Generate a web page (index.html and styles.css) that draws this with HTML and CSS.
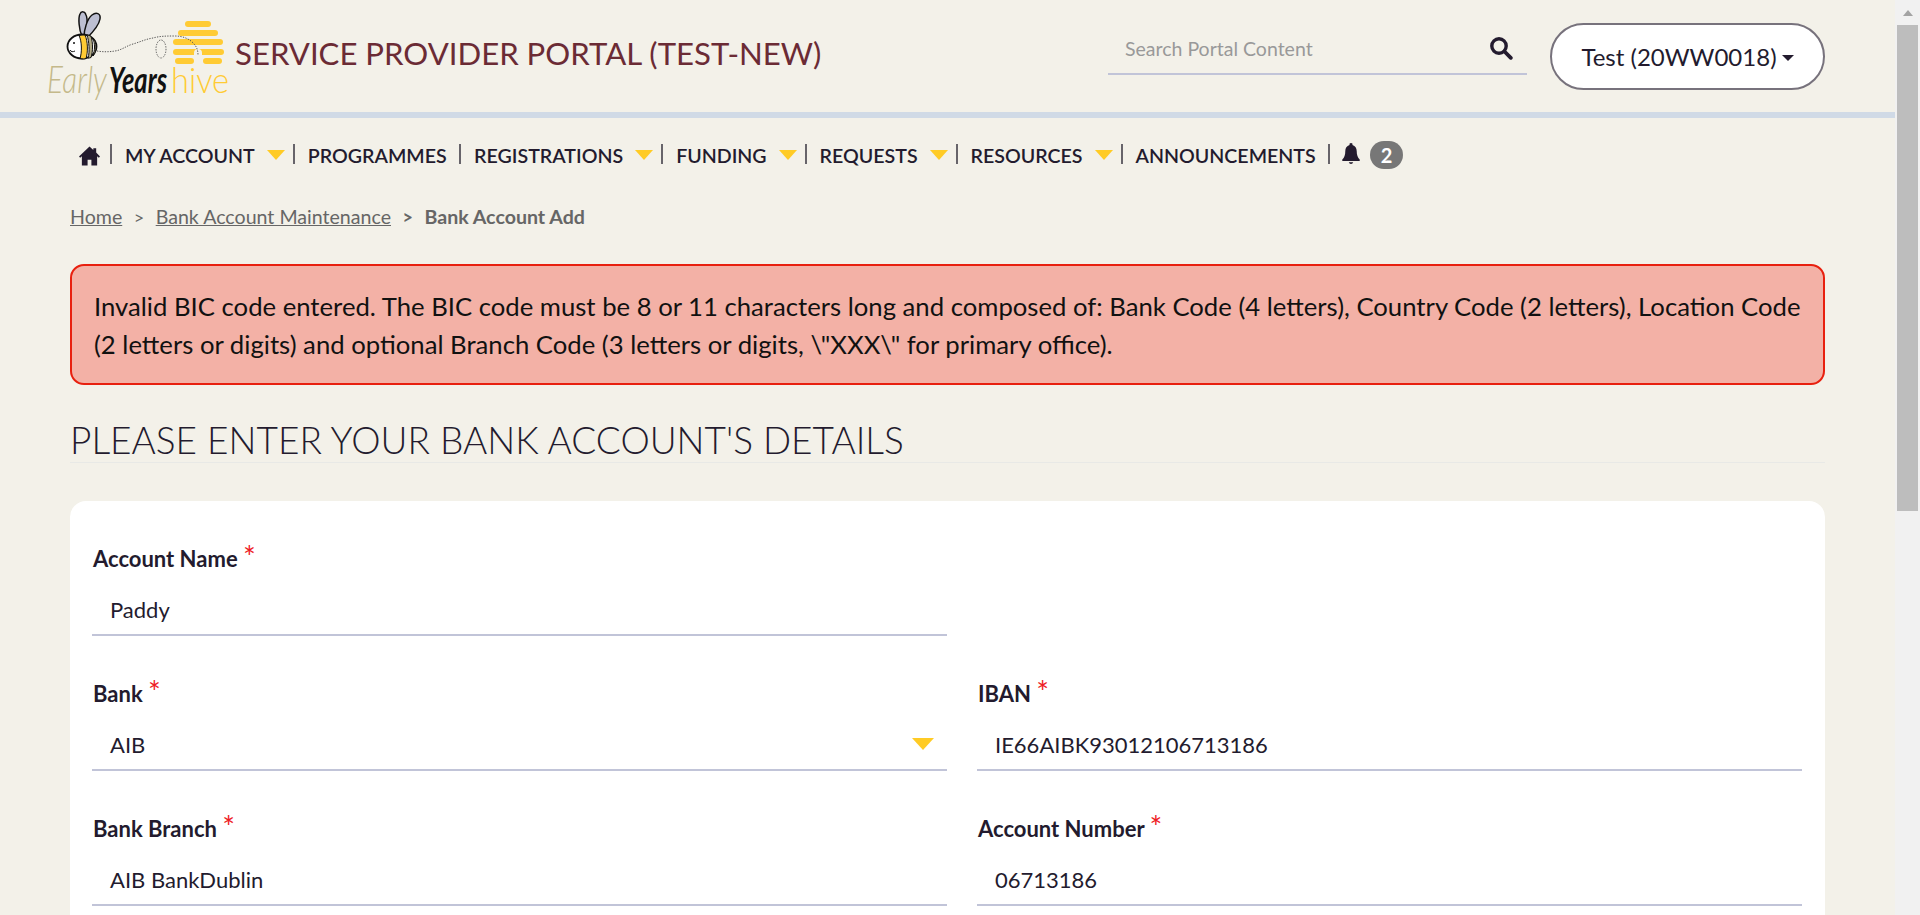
FILE: index.html
```html
<!DOCTYPE html>
<html lang="en">
<head>
<meta charset="utf-8">
<title>Bank Account Add</title>
<link rel="stylesheet" href="styles.css">
</head>
<body>
<div class="window">
  <div class="page">
    <header class="top">
      <svg class="logo" viewBox="0 0 195 100" width="195" height="100" role="img" aria-label="Early Years hive">
        <g fill="#ffcb34">
          <rect x="145" y="16" width="26" height="6" rx="3"/>
          <rect x="138" y="25" width="40" height="6" rx="3"/>
          <rect x="133" y="34" width="50" height="6" rx="3"/>
          <rect x="133" y="44" width="51" height="6" rx="3"/>
          <rect x="135" y="53" width="19" height="6" rx="3"/>
          <rect x="163" y="53" width="19" height="6" rx="3"/>
        </g>
        <path d="M154 50v-2a4 4 0 0 1 8 0v2z" fill="#f3f1e9"/>
        <path d="M57 46c6 1 12 1 18 0 7-1 11-5 18-7 7-2 13-5 20-6 7-2 14-2 22-2 8 0 15 3 19 8 3 3 4 7 4 11" fill="none" stroke="#555" stroke-width="1" stroke-dasharray="1.3 1.3"/>
        <ellipse cx="121" cy="44" rx="5" ry="9" fill="none" stroke="#555" stroke-width="1" stroke-dasharray="1.3 1.3"/>
        <path d="M42 31c-3-6-4-18-2-22 1-3 5-3 6 1 2 4 1 14-1 21z" fill="#bcbfd2" stroke="#111" stroke-width="1.5"/>
        <path d="M44 32c0-7 3-18 8-22 4-3 9-2 8 4-1 6-8 14-13 19z" fill="#bcbfd2" stroke="#111" stroke-width="1.5"/>
        <ellipse cx="42" cy="41.500" rx="14.500" ry="12" fill="#fff" stroke="#111" stroke-width="1.800"/>
        <path d="M39 30.500c3 6 3 17 1 23 3 .5 4 .5 6 0 2-6 2-17-1-23.500-2 0-4 0-6 .5z" fill="#ffcb34" stroke="#111" stroke-width="1"/>
        <path d="M47 30c2 6 3 17 1 23 1 0 2 0 3-.5 2-6 2-15 0-21-1-1-3-1.500-4-1.500z" fill="#b3ab85" stroke="#111" stroke-width="1"/>
        <path d="M53 33c2 6 2 12 0 18 2-2 3-5 3-9s-1-7-3-9z" fill="#b3ab85" stroke="#111" stroke-width="1"/>
        <circle cx="34" cy="38" r="1" fill="#111"/>
        <path d="M30 45c1 2 3 2 5 1" fill="none" stroke="#111" stroke-width="1"/>
        <text transform="translate(7 88) scale(.74 1)" class="lw-early" textLength="81" lengthAdjust="spacingAndGlyphs">Early</text>
        <text transform="translate(69 88) scale(.66 1)" class="lw-years" textLength="88" lengthAdjust="spacingAndGlyphs">Years</text>
        <text transform="translate(131 88) scale(.88 1)" class="lw-hive" textLength="66" lengthAdjust="spacingAndGlyphs">hive</text>
      </svg>
      <div class="portal">SERVICE PROVIDER PORTAL (TEST-NEW)</div>
      <div class="search">
        <span class="search-text">Search Portal Content</span>
        <svg class="search-icon" viewBox="0 0 24 24" width="24" height="24" aria-hidden="true"><circle cx="10" cy="10" r="7.2" fill="none" stroke="#231b2e" stroke-width="3.4"/><path d="M15.5 15.5l6.3 6.3" stroke="#231b2e" stroke-width="3.8" stroke-linecap="round"/></svg>
      </div>
      <button class="user">Test (20WW0018)<span class="caret"></span></button>
    </header>
    <nav class="nav">
      <svg class="home" viewBox="0 0 22 20" width="21" height="20" aria-hidden="true"><path d="M11 0L0 10.500l1.200 1.300L3 10.200V20h6v-6h4v6h6v-9.800l1.800 1.600 1.200-1.300L18 6.300V2h-3v1.600z" fill="#231b2e"/></svg>
      <span class="sep"></span>
      <a class="item">MY ACCOUNT<span class="tri"></span></a><span class="sep"></span>
      <a class="item">PROGRAMMES</a><span class="sep"></span>
      <a class="item">REGISTRATIONS<span class="tri"></span></a><span class="sep"></span>
      <a class="item">FUNDING<span class="tri"></span></a><span class="sep"></span>
      <a class="item">REQUESTS<span class="tri"></span></a><span class="sep"></span>
      <a class="item">RESOURCES<span class="tri"></span></a><span class="sep"></span>
      <a class="item">ANNOUNCEMENTS</a><span class="sep"></span>
      <svg class="bell" viewBox="0 0 18 22" width="18" height="22" aria-hidden="true"><path d="M9 0a1.600 1.600 0 0 0-1.500 2C4.700 2.800 3.300 5.300 3.300 8c0 4-1 6.500-3 8.500v1.500h17.400v-1.500c-2-2-3-4.500-3-8.500 0-2.700-1.400-5.200-4.200-6A1.600 1.600 0 0 0 9 0zM6.800 19.300a2.300 2.300 0 0 0 4.400 0z" fill="#231b2e"/></svg>
      <span class="badge">2</span>
    </nav>
    <main class="content">
      <div class="crumbs"><a href="#">Home</a><span class="gt">&gt;</span><a href="#">Bank Account Maintenance</a><span class="gt strong">&gt;</span><b>Bank Account Add</b></div>
      <div class="alert">Invalid BIC code entered. The BIC code must be 8 or 11 characters long and composed of: Bank Code (4 letters), Country Code (2 letters), Location Code (2 letters or digits) and optional Branch Code (3 letters or digits, \"XXX\" for primary office).</div>
      <h1 class="heading">PLEASE ENTER YOUR BANK ACCOUNT'S DETAILS</h1>
      <form class="card">
        <div class="field">
          <label>Account Name <i>*</i></label>
          <div class="value">Paddy</div>
        </div>
        <div class="field"></div>
        <div class="field">
          <label>Bank <i>*</i></label>
          <div class="value">AIB<span class="tri select"></span></div>
        </div>
        <div class="field">
          <label>IBAN <i>*</i></label>
          <div class="value">IE66AIBK93012106713186</div>
        </div>
        <div class="field">
          <label>Bank Branch <i>*</i></label>
          <div class="value">AIB BankDublin</div>
        </div>
        <div class="field">
          <label>Account Number <i>*</i></label>
          <div class="value">06713186</div>
        </div>
      </form>
    </main>
  </div>
  <div class="scrollbar"><div class="sb-up"></div><div class="sb-thumb"></div></div>
</div>
</body>
</html>
```
FILE: styles.css
```css
* { box-sizing: border-box; }
html, body { margin: 0; height: 100%; overflow: hidden; }
body { font-family: Lato, "Liberation Sans", sans-serif; color: #231b2e; background: #f3f1e9; }
a { color: inherit; }

.window { display: flex; height: 915px; }
.page { flex: 1; min-width: 0; overflow: hidden; }

.top { height: 118px; display: flex; align-items: flex-start; border-bottom: 6px solid #d0dae6; padding-left: 40px; }
.logo { margin-top: 5px; flex: none; display: block; font-family: Lato, sans-serif; }
.lw-early { fill: #c4b98a; font-size: 38px; font-style: italic; font-weight: 300; }
.lw-years { fill: #111; font-size: 36px; font-style: italic; font-weight: 700; }
.lw-hive { fill: #ffcb34; font-size: 36px; font-weight: 300; }
.portal { font-size: 31.15px; line-height: 36px; color: #6b2b35; margin-top: 35px; width: 873px; flex: none; white-space: nowrap; }
.search { width: 419px; height: 75px; flex: none; border-bottom: 2px solid #c1c4d8; display: flex; justify-content: space-between; align-items: center; padding: 24px 14px 0 17px; }
.search-text { font-size: 19.5px; color: #999; }
.search-icon { margin-top: -2px; }
.user { margin-left: 23px; width: 275px; height: 67px; margin-top: 23px; flex: none; background: #fff; border: 2px solid #77727c; border-radius: 34px; font: 400 24px Lato, sans-serif; color: #231b2e; display: flex; align-items: center; justify-content: center; padding: 0; }
.caret { border-left: 6px solid transparent; border-right: 6px solid transparent; border-top: 6px solid #231b2e; margin-left: 5px; margin-top: 2px; }

.nav { display: flex; align-items: center; height: 43px; margin-top: 16px; padding-left: 79px; font-size: 19.6px; font-weight: 600; white-space: nowrap; }
.home { flex: none; }
.sep { width: 2px; height: 20px; background: #67646a; margin: -4px 13px 0 12.5px; flex: none; }
.home + .sep { margin-left: 10px; }
.item { display: flex; align-items: center; }
.tri { display: inline-block; width: 0; height: 0; border-left: 9.5px solid transparent; border-right: 9.5px solid transparent; border-top: 10px solid #ffcb25; margin-left: 12px; margin-right: -4.5px; margin-top: -2px; }
.bell { margin-left: -1px; margin-top: -3px; flex: none; }
.badge { background: #777; color: #fff; font-weight: 700; width: 33px; height: 28px; border-radius: 14px; display: flex; align-items: center; justify-content: center; font-size: 20px; margin-left: 10px; margin-top: -1px; }

.content { padding: 0 0 0 70px; width: 1825px; }
.crumbs { margin-top: 27px; height: 26px; font-size: 19.6px; line-height: 26px; color: #666; white-space: nowrap; }
.crumbs b { font-weight: 700; }
.gt { margin: 0 11.5px; font-size: 18px; }
.gt.strong { font-weight: 700; }
.alert { margin-top: 34px; height: 121px; border: 2px solid #e8200f; border-radius: 14px; background: #f3b1a6; padding: 21px 22px 0 22px; font-size: 25.7px; line-height: 38px; color: #111; }
.heading { margin: 33px 0 0; height: 45px; border-bottom: 1px solid #e8e9e6; font-size: 37px; line-height: 44px; font-weight: 300; color: #231b2e; white-space: nowrap; }
.card { margin-top: 38px; background: #fff; border-radius: 16px; padding: 44px 22px 0; display: grid; grid-template-columns: 855px 825px; column-gap: 30px; row-gap: 0; height: 500px; align-content: start; }
.field { height: 135px; }
.field label { display: block; padding-left: 1px; font-size: 22px; line-height: 26px; font-weight: 700; }
.field label i { color: #ee1c25; font-style: normal; font-weight: 400; font-size: 30px; line-height: 20px; position: relative; top: 1px; }
.value { margin-top: 12px; height: 52px; padding: 0 0 0 18px; border-bottom: 2px solid #c1c4d8; font-size: 22px; display: flex; justify-content: space-between; align-items: center; }
.tri.select { border-left-width: 11px; border-right-width: 11px; border-top-width: 12px; margin: 0 13px 0 0; }

.scrollbar { width: 25px; flex: none; background: #f1f1f1; display: flex; flex-direction: column; align-items: flex-end; padding-right: 2px; }
.sb-up { width: 21px; height: 25px; display: flex; justify-content: center; padding-top: 10px; }
.sb-up::before { content: ""; width: 0; height: 0; border-left: 5.5px solid transparent; border-right: 5.5px solid transparent; border-bottom: 6px solid #a3a3a3; }
.sb-thumb { width: 21px; height: 486px; background: #bdbdbd; }
```
